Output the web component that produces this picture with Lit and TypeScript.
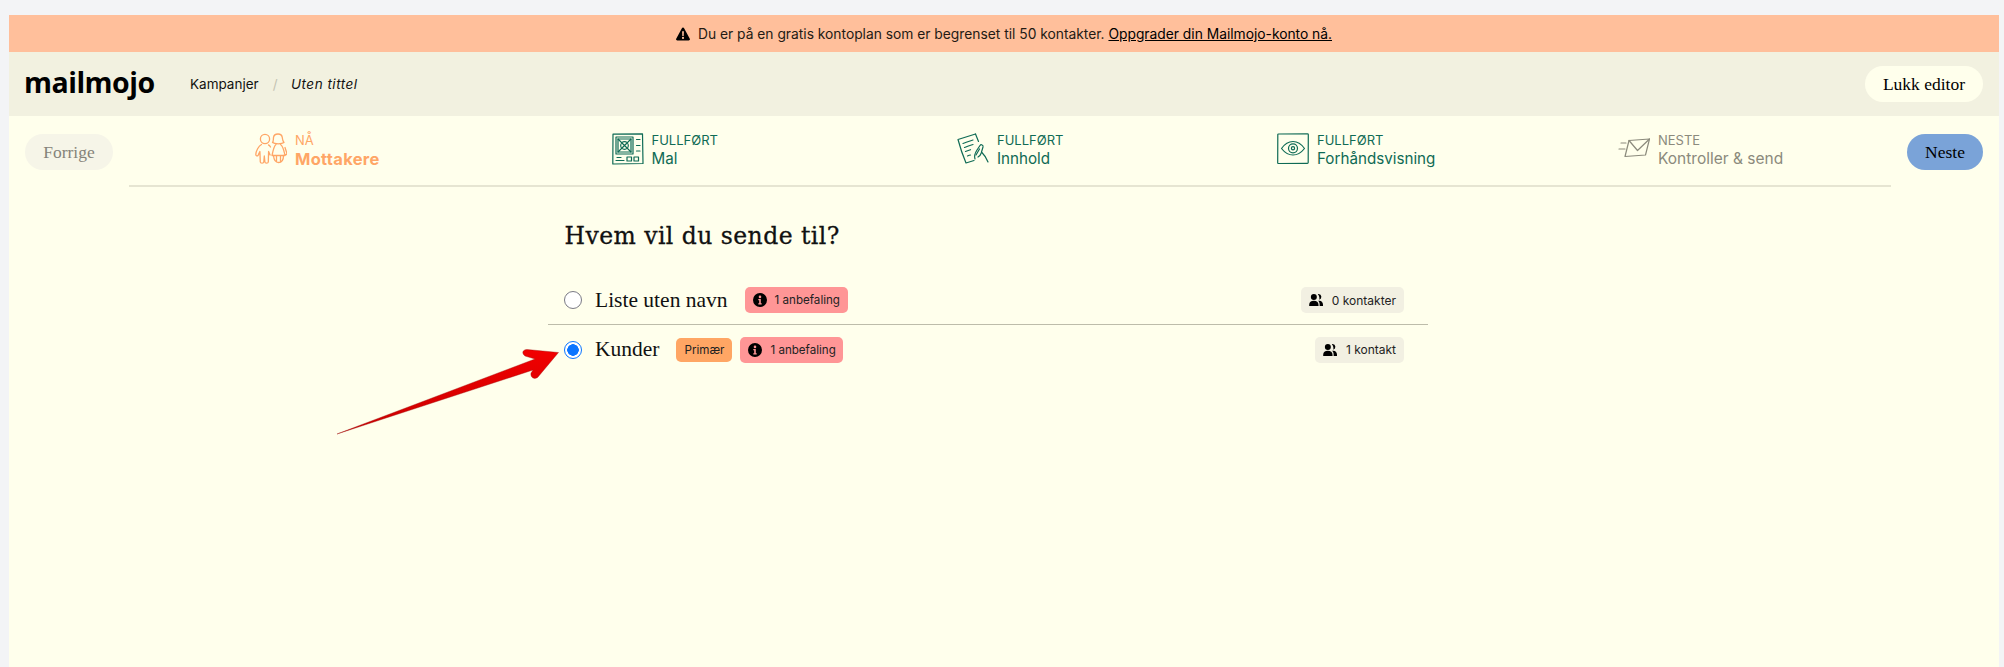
import { LitElement, html, css, svg } from "lit";
import { customElement } from "lit/decorators.js";

const kidsIcon = svg`
  <g fill="none" stroke="currentColor" stroke-width="1.3" stroke-linecap="round" stroke-linejoin="round">
    <circle cx="10" cy="6" r="4.6"/>
    <path d="M6.5 11.5C3.5 13 1 18 .8 21.5c0 1.5 1.6 2 2.4.6l1.7-3.6.4 10.5c.1 1.6 3.3 1.6 3.5 0l.5-6 .6 6c.2 1.6 3.2 1.6 3.4 0l.3-10.500 1.500 3.500"/>
    <path d="M13.500 12c1 .2 1.500 1 2 2"/>
    <path d="M17.500 9.500c1-1 .8-3 1-5C18.800 2 21 1 23 1s4 1.200 4.300 3.500c.2 2 .2 3.500 1.700 5-1.500 1.200-3.500 1.300-5.700 1.300-2.200 0-4.500-.2-5.800-1.300z"/>
    <path d="M21 11.500c-1.500 1-3 6-4 11h13c-1-4-1.500-9-4.500-11M30 14.500l1.800 5.500c.4 1.500-1.300 2.500-2.200 1"/>
    <path d="M18.500 22.500c.3 3.500 1.500 7 5 7s5-3.500 5-7M21.500 23v5.500M25.500 23v5.500"/>
  </g>`;

const templateIcon = svg`
  <g fill="none" stroke="currentColor" stroke-width="1.2" stroke-linecap="round" stroke-linejoin="round">
    <path d="M1 1.200 30.500.8 31 30.500 .8 31z"/>
    <rect x="4" y="4" width="17" height="17"/>
    <rect x="6" y="6" width="13" height="13"/>
    <path d="M6 6l13 13M19 6 6 19"/>
    <circle cx="12.500" cy="12.500" r="3.800"/>
    <path d="M24.500 6.500h3.500M24.500 12.500h3.500M24.500 18h3.500M5 24.500h4M4 27.500h8"/>
    <rect x="15" y="24" width="4.500" height="4"/>
    <rect x="22" y="24" width="4.500" height="4"/>
  </g>`;

const contentIcon = svg`
  <g fill="none" stroke="currentColor" stroke-width="1.2" stroke-linecap="round" stroke-linejoin="round">
    <path d="M18.500 1 1 6.500C3 14 6 23 9 30l8-2.500"/>
    <path d="M18.500 1l3 7.500"/>
    <path d="M6 10.500c3-1 6-2.500 10-3.500M7.500 14.500c3-1 5-2 8.500-3M8.500 18.500c1.500-.5 3-1 5-1.800M10.500 23c1-.4 2-.8 3-1"/>
    <path d="M18 26c-1-3 0-6 2-9l3-4.500c1-1.500 3.500-.5 3 1.500l-1.500 5c2 2 5 6 6.500 10"/>
    <path d="M19 22l3.500-6M21 24c1-.5 3-3 3.500-4.500"/>
  </g>`;

const eyeIcon = svg`
  <g fill="none" stroke="currentColor" stroke-width="1.200" stroke-linecap="round" stroke-linejoin="round">
    <path d="M1.500 1 30.500.8c.5 0 .8.300.8.800l-.1 28c0 .5-.3.800-.8.800L1.500 30.500c-.5 0-.8-.3-.8-.8L.8 1.800c0-.5.200-.8.700-.8z"/>
    <path d="M4.500 15.500C8 10.500 12 8.500 16 8.500s8 2 11.500 7c-3.500 4.500-7.500 6.500-11.500 6.500s-8-2-11.500-6.500z"/>
    <circle cx="16" cy="15.300" r="4.500"/>
    <circle cx="16" cy="15.300" r="1.600"/>
  </g>`;

const sendIcon = svg`
  <g fill="none" stroke="currentColor" stroke-width="1.200" stroke-linecap="round" stroke-linejoin="round">
    <path d="M11 7.500 31.500 6 27.500 22 7 23.500z"/>
    <path d="M11 7.500 19.500 17.500 31.500 6"/>
    <path d="M3 10h5M1 16h6"/>
  </g>`;

const warnIcon = svg`<path fill-rule="evenodd" d="M7 .5c.5 0 .9.300 1.100.700l5.700 10.500c.4.800-.1 1.800-1.100 1.800H1.300c-1 0-1.500-1-1.100-1.800L5.900 1.200C6.100.8 6.500.5 7 .5zM6.100 4.300l.2 4.700h1.400l.2-4.700zM7 9.800a1.100 1.100 0 1 0 0 2.200 1.100 1.100 0 0 0 0-2.200z"/>`;

const infoIcon = svg`<path fill-rule="evenodd" d="M7 0a7 7 0 1 1 0 14A7 7 0 0 1 7 0zm0 2.600a1.300 1.300 0 1 0 0 2.600 1.300 1.300 0 0 0 0-2.600zM5.300 6v1.300h.9v2.900h-.9v1.300h3.400v-1.300h-.9V6z"/>`;

const peopleIcon = svg`<path d="M5.200 .5a3.200 3.200 0 1 1 0 6.400 3.200 3.200 0 0 1 0-6.400zM10.300.7a3 3 0 0 1 .7 5.900c.5-1.700.1-4.200-1.500-5.800.3-.1.500-.1.800-.1zM5.200 7.800c3 0 5 1.700 5 4.200v1.500H.2V12c0-2.500 2-4.200 5-4.200zM11.200 7.800c2.400.2 3.800 1.800 3.800 4.200v1.500h-3.600V12c0-1.700-.4-3-1.700-4.100.5-.1 1-.1 1.500-.1z"/>`;

const steps = [
  { icon: kidsIcon, tag: "NÅ", name: "Mottakere", state: "now" },
  { icon: templateIcon, tag: "FULLFØRT", name: "Mal", state: "done" },
  { icon: contentIcon, tag: "FULLFØRT", name: "Innhold", state: "done" },
  { icon: eyeIcon, tag: "FULLFØRT", name: "Forhåndsvisning", state: "done" },
  { icon: sendIcon, tag: "NESTE", name: "Kontroller & send", state: "next" },
];

const lists = [
  { name: "Liste uten navn", primary: false, checked: false, count: "0 kontakter" },
  { name: "Kunder", primary: true, checked: true, count: "1 kontakt" },
];

@customElement("app-root")
export class AppRoot extends LitElement {
  static styles = css`
    :host {
      display: block;
      min-height: 667px;
      box-sizing: border-box;
      padding: 15px 5px 0 9px;
      background: #f3f4f6;
      font-family: "Inter", "Liberation Sans", sans-serif;
      color: #000;
    }
    .card {
      position: relative;
      min-height: 652px;
      background: #ffffec;
    }
    .banner {
      height: 37px;
      background: #ffbf9b;
      display: flex;
      align-items: center;
      justify-content: center;
      gap: 8px;
      font-size: 13.8px;
      color: #231a14;
    }
    .banner svg { width: 14px; height: 14px; fill: #000; }
    .banner a { color: #000; text-decoration: underline; }
    .top {
      height: 64px;
      background: #f2f1e0;
      display: flex;
      align-items: center;
      padding: 0 16px 0 15px;
    }
    .logo {
      font-family: "Open Sans", sans-serif;
      font-weight: 700;
      font-size: 28.5px;
      letter-spacing: -0.5px;
      line-height: 1;
      width: 130px;
      margin-top: -4px;
    }
    .crumbs {
      margin-left: 36px;
      font-size: 13.5px;
      display: flex;
      align-items: center;
      color: #111;
    }
    .crumbs .sep { color: #c4c3b2; margin: 0 13.5px 0 14px; }
    .crumbs em { font-style: italic; letter-spacing: 0.5px; }
    .btn {
      font-family: "Liberation Serif", serif;
      font-size: 17.5px;
      height: 36px;
      border-radius: 18px;
      display: flex;
      align-items: center;
      justify-content: center;
    }
    .close { margin-left: auto; width: 118px; background: #ffffec; }
    .nav {
      display: flex;
      align-items: flex-start;
      padding: 18px 16px 0;
      height: 53px;
    }
    .prev { width: 88px; background: #f6f5e8; color: #85837a; flex: none; }
    .next { width: 76px; background: #7aa3d8; color: #000; flex: none; }
    .rail {
      flex: none;
      width: 1762px;
      margin: -18px 16px 0 16px;
      height: 71px;
      box-sizing: border-box;
      border-bottom: 2px solid #e6e5d2;
      padding: 17px 0 0 126px;
      display: grid;
      grid-template-columns: 356.5px 345.5px 320px 341px 1fr;
    }
    .step { display: flex; gap: 8px; align-items: flex-start; }
    .step svg { width: 32px; height: 32px; flex: none; }
    .step .txt { margin-top: -3px; }
    .step .tag { font-size: 13px; line-height: 16px; height: 19px; padding-top: 2px; box-sizing: border-box; }
    .step .name { font-size: 15.2px; line-height: 20px; }
    .now { color: #ffa666; }
    .now .name { font-weight: 700; font-size: 16.5px; letter-spacing: 0.3px; }
    .done { color: #0f6b55; }
    .step.pending { color: #8b8a7c; }
    .step.pending .name { font-size: 15.5px; }
    .main {
      margin: 0 0 0 539px;
      width: 880px;
    }
    h1 {
      margin: 0;
      padding: 33px 0 0 16.5px;
      height: 89px;
      box-sizing: border-box;
      font-family: "DejaVu Serif", serif;
      font-weight: 400;
      font-size: 23.5px;
      letter-spacing: 0.45px;
      line-height: 32px;
      color: #111;
      -webkit-text-stroke: 0.3px #111;
    }
    .row {
      display: flex;
      align-items: center;
      height: 48px;
      box-sizing: border-box;
      padding: 0 24px 0 16px;
    }
    .row + .row { border-top: 1px solid #bdbcaa; height: 50px; }
    .radio {
      width: 18px;
      height: 18px;
      flex: none;
      box-sizing: border-box;
      border-radius: 50%;
      border: 1px solid #7a7a85;
      background: #fff;
    }
    .radio.on {
      border: 1.500px solid #0a75ff;
      background: radial-gradient(circle, #0a75ff 0 5.500px, #fff 6px);
    }
    .label {
      font-family: "Liberation Serif", serif;
      font-size: 21.5px;
      margin-left: 13px;
      margin-right: 17px;
      color: #111;
    }
    .badge {
      display: flex;
      align-items: center;
      border-radius: 5px;
      height: 26px;
      font-size: 11.6px;
      color: #222;
      box-sizing: border-box;
    }
    .primary { background: #ffa664; height: 24px; padding: 0 8px; margin-right: 8px; }
    .rec { background: #ff9696; padding: 0 8px; gap: 8px; width: 103px; white-space: nowrap; }
    .rec svg { width: 14px; height: 14px; fill: #000; flex: none; }
    .count { margin-left: auto; background: #f2f0e2; padding: 0 8px; gap: 9px; font-size: 12px; }
    .count svg { width: 14px; height: 14px; fill: #000; flex: none; }
    .arrow {
      position: absolute;
      left: 320px;
      top: 330px;
      width: 250px;
      height: 110px;
    }
  `;

  render() {
    return html`
      <div class="card">
        <div class="banner">
          <svg viewBox="0 0 14 14">${warnIcon}</svg>
          <span>Du er på en gratis kontoplan som er begrenset til 50 kontakter. <a href="#">Oppgrader din Mailmojo-konto nå.</a></span>
        </div>
        <header class="top">
          <div class="logo">mailmojo</div>
          <nav class="crumbs">
            <span>Kampanjer</span><span class="sep">/</span><em>Uten tittel</em>
          </nav>
          <div class="btn close">Lukk editor</div>
        </header>
        <div class="nav">
          <div class="btn prev">Forrige</div>
          <div class="rail">
            ${steps.map(
              (s) => html`
                <div class="step ${s.state === "now" ? "now" : s.state === "done" ? "done" : "pending"}">
                  <svg viewBox="0 0 32 32">${s.icon}</svg>
                  <div class="txt">
                    <div class="tag">${s.tag}</div>
                    <div class="name">${s.name}</div>
                  </div>
                </div>
              `
            )}
          </div>
          <div class="btn next">Neste</div>
        </div>
        <section class="main">
          <h1>Hvem vil du sende til?</h1>
          ${lists.map(
            (l) => html`
              <div class="row">
                <span class="radio ${l.checked ? "on" : ""}"></span>
                <span class="label">${l.name}</span>
                ${l.primary ? html`<span class="badge primary">Primær</span>` : ""}
                <span class="badge rec"><svg viewBox="0 0 14 14">${infoIcon}</svg>1 anbefaling</span>
                <span class="badge count"><svg viewBox="0 0 15 14">${peopleIcon}</svg>${l.count}</span>
              </div>
            `
          )}
        </section>
        <svg class="arrow" viewBox="0 0 250 110">
          <defs>
            <linearGradient id="red" x1="0" y1="0" x2="0" y2="1">
              <stop offset="0" stop-color="#f20000" />
              <stop offset="1" stop-color="#c80000" />
            </linearGradient>
          </defs>
          <path
            fill="url(#red)"
            stroke="#a01010"
            stroke-width="0.4"
            d="M8 89 L206 14 L196 11 C192 8 194 4.500 198 4.500 L229.500 7.500 L209 32 C206 35 201 33 202 28 L204 25 Z"
          />
        </svg>
      </div>
    `;
  }
}
